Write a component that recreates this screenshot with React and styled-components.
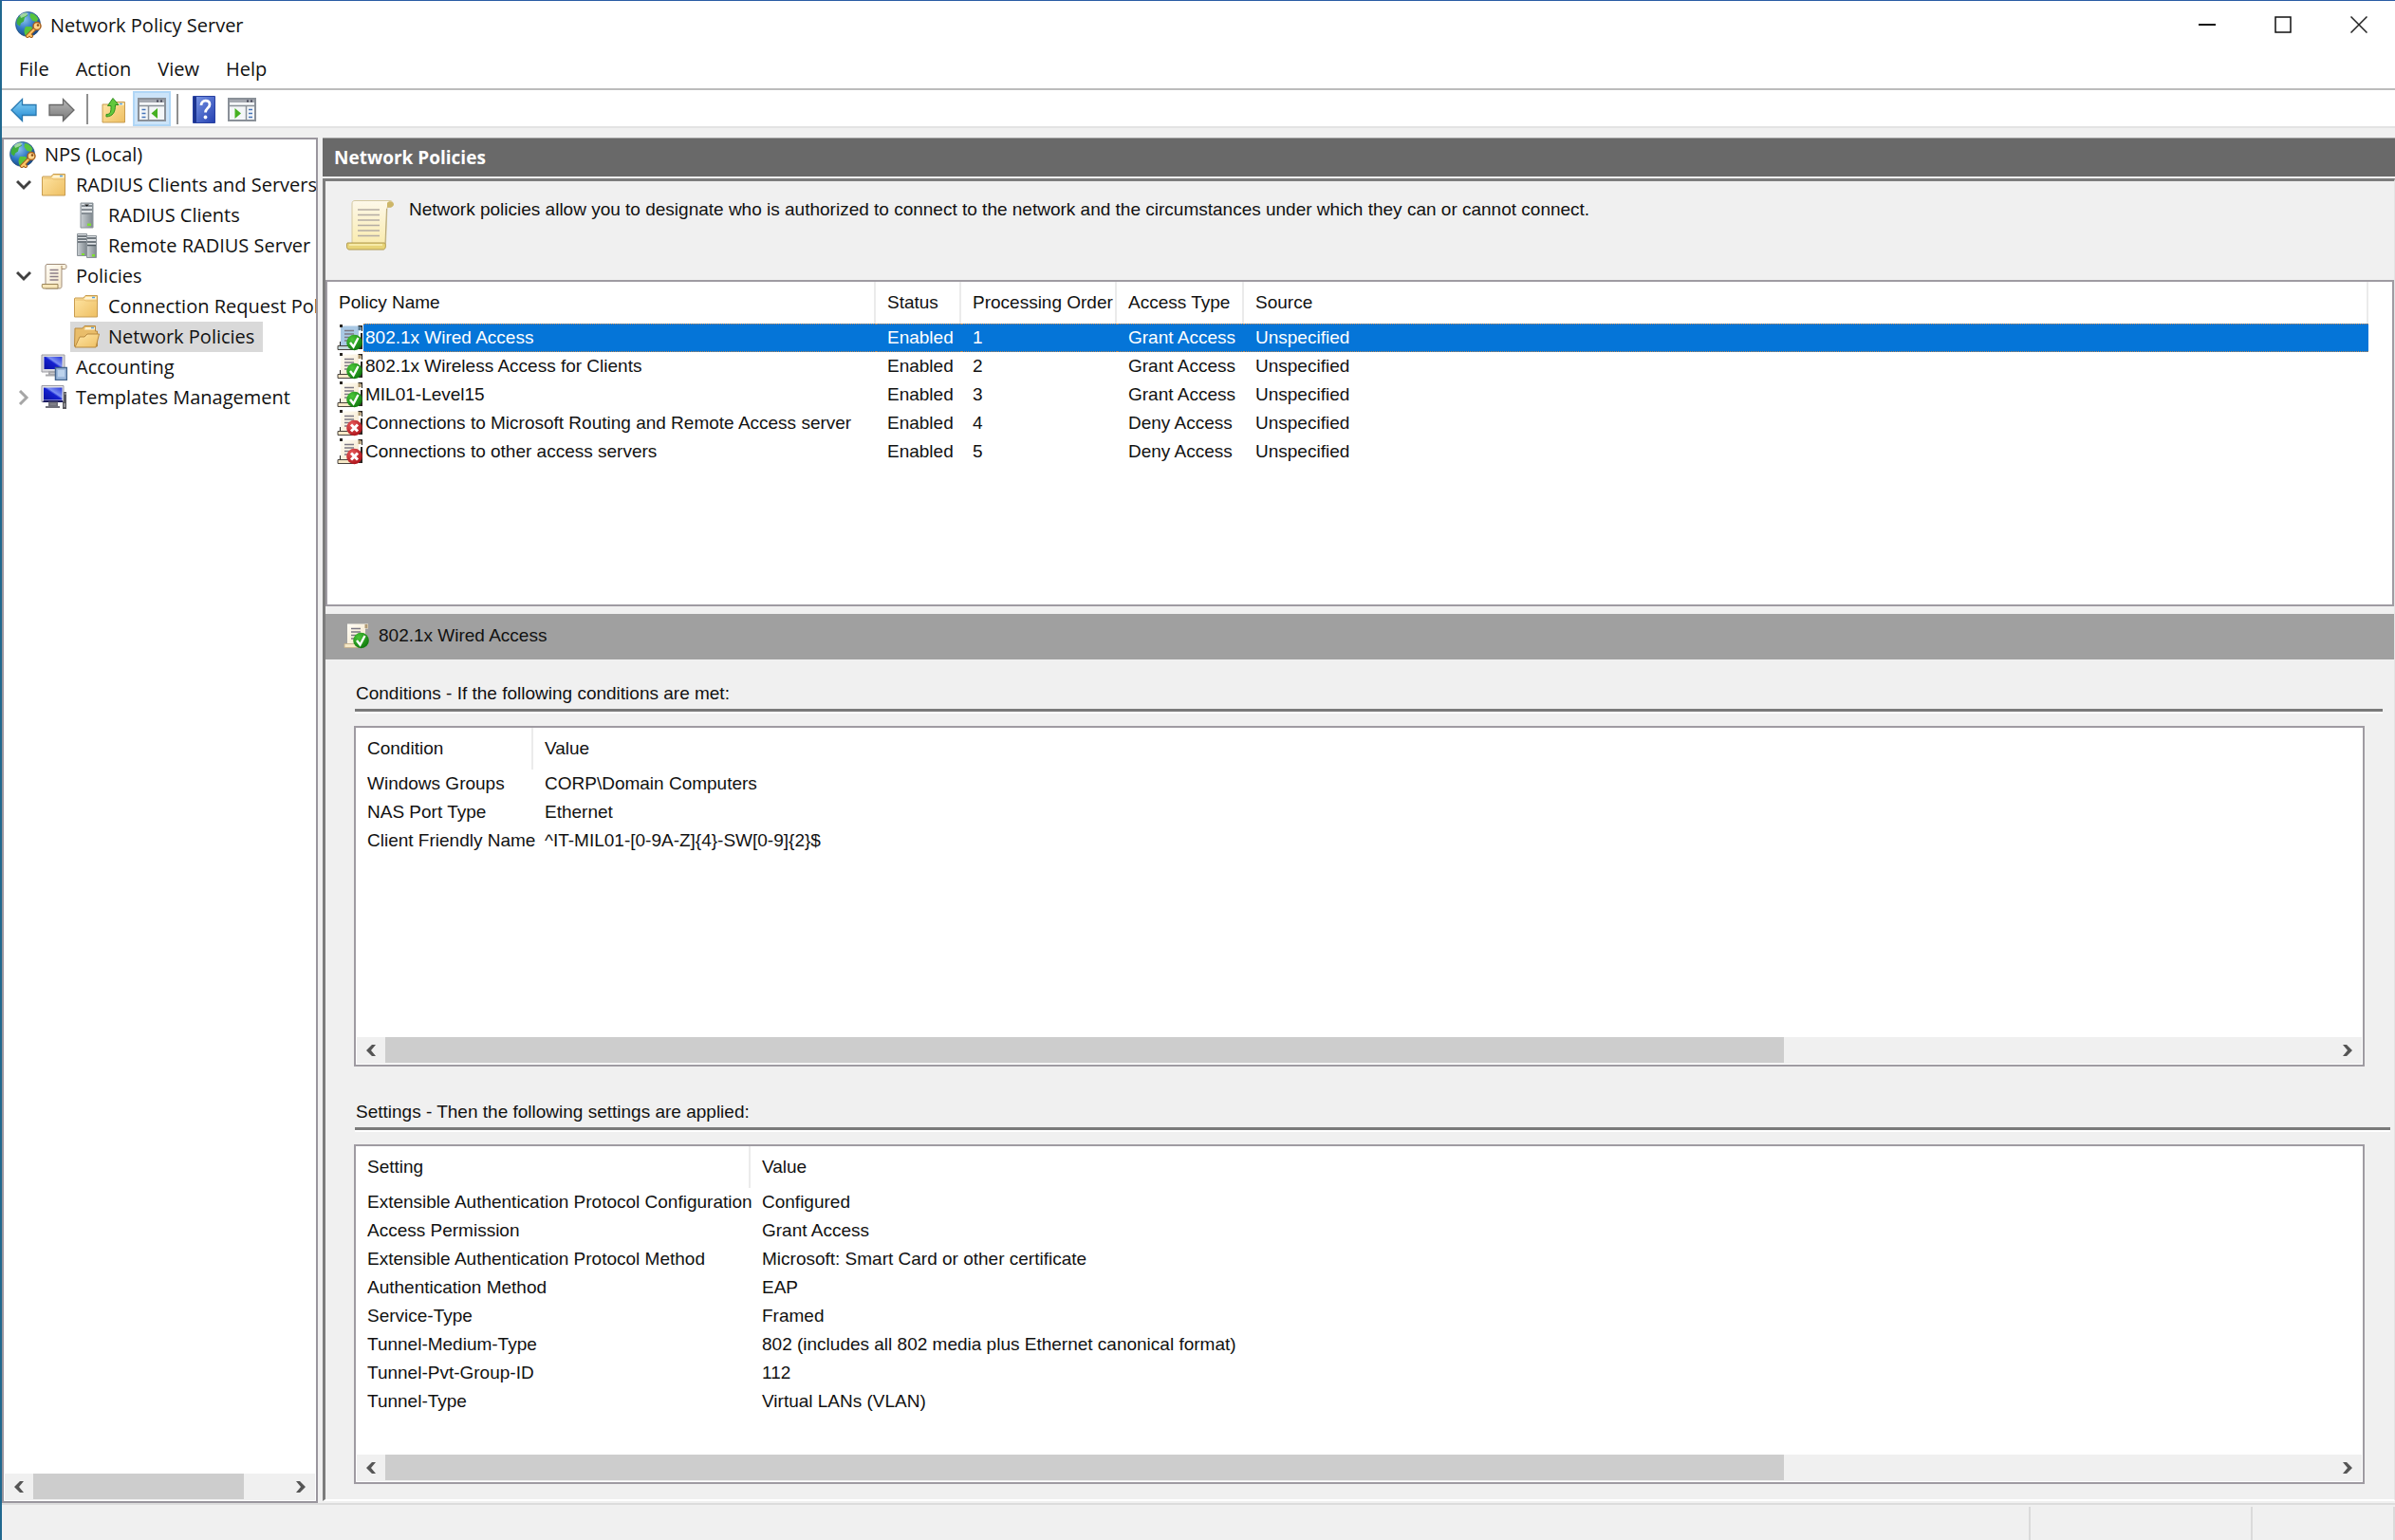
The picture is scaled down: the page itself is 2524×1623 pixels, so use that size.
import React from 'react'
import styled, { createGlobalStyle } from 'styled-components'

const policies = [
  { name: '802.1x Wired Access', status: 'Enabled', order: 1, access: 'Grant Access', source: 'Unspecified' },
  { name: '802.1x Wireless Access for Clients', status: 'Enabled', order: 2, access: 'Grant Access', source: 'Unspecified' },
  { name: 'MIL01-Level15', status: 'Enabled', order: 3, access: 'Grant Access', source: 'Unspecified' },
  { name: 'Connections to Microsoft Routing and Remote Access server', status: 'Enabled', order: 4, access: 'Deny Access', source: 'Unspecified' },
  { name: 'Connections to other access servers', status: 'Enabled', order: 5, access: 'Deny Access', source: 'Unspecified' },
]

const conditions = [
  ['Windows Groups', 'CORP\\Domain Computers'],
  ['NAS Port Type', 'Ethernet'],
  ['Client Friendly Name', '^IT-MIL01-[0-9A-Z]{4}-SW[0-9]{2}$'],
]

const settings = [
  ['Extensible Authentication Protocol Configuration', 'Configured'],
  ['Access Permission', 'Grant Access'],
  ['Extensible Authentication Protocol Method', 'Microsoft: Smart Card or other certificate'],
  ['Authentication Method', 'EAP'],
  ['Service-Type', 'Framed'],
  ['Tunnel-Medium-Type', '802 (includes all 802 media plus Ethernet canonical format)'],
  ['Tunnel-Pvt-Group-ID', '112'],
  ['Tunnel-Type', 'Virtual LANs (VLAN)'],
]

const tree = [
  { label: 'NPS (Local)', level: 0, icon: GlobeIcon },
  { label: 'RADIUS Clients and Servers', level: 1, icon: FolderIcon, state: 'open' },
  { label: 'RADIUS Clients', level: 2, icon: ServerIcon },
  { label: 'Remote RADIUS Server Groups', level: 2, icon: ServersIcon },
  { label: 'Policies', level: 1, icon: ScrollIcon, state: 'open' },
  { label: 'Connection Request Policies', level: 2, icon: FolderIcon },
  { label: 'Network Policies', level: 2, icon: OpenFolderIcon, selected: true },
  { label: 'Accounting', level: 1, icon: AccountingIcon },
  { label: 'Templates Management', level: 1, icon: TemplatesIcon, state: 'closed' },
]

export default function App() {
  return (
    <Window>
      <GlobalStyle />
      <Gradients />
      <TitleBar>
        <GlobeIcon />
        <Title>Network Policy Server</Title>
        <CaptionButtons>
          <CaptionButton aria-label="Minimize">
            <svg width="18" height="18" viewBox="0 0 18 18"><path d="M0 9h18" stroke="#111" strokeWidth="2" /></svg>
          </CaptionButton>
          <CaptionButton aria-label="Maximize">
            <svg width="18" height="18" viewBox="0 0 18 18"><path d="M1 1h16v16H1z" fill="none" stroke="#111" strokeWidth="1.500" /></svg>
          </CaptionButton>
          <CaptionButton aria-label="Close">
            <svg width="18" height="18" viewBox="0 0 18 18"><path d="M0.500 0.500l17 17M17.500 0.500l-17 17" stroke="#222" strokeWidth="1.500" /></svg>
          </CaptionButton>
        </CaptionButtons>
      </TitleBar>
      <MenuBar>
        <MenuItem>File</MenuItem>
        <MenuItem>Action</MenuItem>
        <MenuItem>View</MenuItem>
        <MenuItem>Help</MenuItem>
      </MenuBar>
      <Toolbar>
        <ToolButton aria-label="Back"><BackIcon /></ToolButton>
        <ToolButton aria-label="Forward"><ForwardIcon /></ToolButton>
        <Separator />
        <ToolButton aria-label="Up one level"><UpIcon /></ToolButton>
        <ToolButton aria-label="Show/Hide Console Tree" $active><TreePaneIcon /></ToolButton>
        <Separator />
        <ToolButton aria-label="Help topics"><HelpIcon /></ToolButton>
        <ToolButton aria-label="Show/Hide Action Pane"><ActionPaneIcon /></ToolButton>
      </Toolbar>
      <Body>
        <TreePane>
          <Tree>
            {tree.map(({ label, level, icon: Icon, state, selected }) => (
              <TreeRow key={label} $level={level}>
                {level === 1 && <Expander $closed={state === 'closed'}>{state && <Chevron />}</Expander>}
                <TreeItem $selected={selected}>
                  <Icon />
                  {label}
                </TreeItem>
              </TreeRow>
            ))}
          </Tree>
          <HScroll size={83} />
        </TreePane>
        <Content>
          <PaneTitle>Network Policies</PaneTitle>
          <Frame>
            <Description>
              <BigScroll />
              <DescriptionText>
                Network policies allow you to designate who is authorized to connect to the network and the circumstances under which they can or cannot connect.
              </DescriptionText>
            </Description>
            <PolicyBox>
              <PolicyTable>
                <colgroup>
                  <Col $w={38} />
                  <Col $w={540} />
                  <Col $w={90} />
                  <Col $w={164} />
                  <Col $w={134} />
                  <col />
                </colgroup>
                <thead>
                  <tr>
                    <Th colSpan={2}>Policy Name</Th>
                    <Th>Status</Th>
                    <Th>Processing Order</Th>
                    <Th>Access Type</Th>
                    <Th>Source</Th>
                  </tr>
                </thead>
                <tbody>
                  {policies.map((p, i) => (
                    <PolicyRow key={p.name} $selected={i === 0}>
                      <IconTd><PolicyIcon deny={p.access === 'Deny Access'} tinted={i === 0} framed /></IconTd>
                      <NameTd>{p.name}</NameTd>
                      <Td>{p.status}</Td>
                      <Td>{p.order}</Td>
                      <Td>{p.access}</Td>
                      <Td>{p.source}</Td>
                    </PolicyRow>
                  ))}
                </tbody>
              </PolicyTable>
            </PolicyBox>
            <PolicyBar>
              <PolicyIcon />
              802.1x Wired Access
            </PolicyBar>
            <GroupHeading $top={24} $end={12}>Conditions - If the following conditions are met:</GroupHeading>
            <DetailList heads={['Condition', 'Value']} rows={conditions} first={187} />
            <GroupHeading $top={36} $end={4}>Settings - Then the following settings are applied:</GroupHeading>
            <DetailList heads={['Setting', 'Value']} rows={settings} first={416} />
          </Frame>
        </Content>
      </Body>
      <StatusBar>
        <StatusCell $grow />
        <StatusCell $w={234} />
        <StatusCell $w={150} />
      </StatusBar>
    </Window>
  )
}

function DetailList({ heads, rows, first }) {
  return (
    <DetailBox>
      <Table>
        <colgroup>
          <Col $w={first} />
          <col />
        </colgroup>
        <thead>
          <tr>
            <Th>{heads[0]}</Th>
            <Th $last>{heads[1]}</Th>
          </tr>
        </thead>
        <tbody>
          {rows.map(([name, value]) => (
            <tr key={name}>
              <Td>{name}</Td>
              <Td>{value}</Td>
            </tr>
          ))}
        </tbody>
      </Table>
      <HScroll size={71.8} />
    </DetailBox>
  )
}

function HScroll({ size }) {
  return (
    <ScrollBar>
      <ScrollButton aria-label="Scroll left">
        <svg width="12" height="14" viewBox="0 0 12 14"><path d="M11 1H7L1 7l6 6h4L6 7z" fill="#555" /></svg>
      </ScrollButton>
      <Track>
        <Thumb style={{ width: `${size}%` }} />
      </Track>
      <ScrollButton aria-label="Scroll right">
        <svg width="12" height="14" viewBox="0 0 12 14"><path d="M1 1h4l6 6-6 6H1l5-6z" fill="#555" /></svg>
      </ScrollButton>
    </ScrollBar>
  )
}

function Gradients() {
  return (
    <HiddenSvg width="0" height="0" aria-hidden="true">
      <defs>
        <radialGradient id="sea" cx="0.35" cy="0.3" r="0.8">
          <stop offset="0" stopColor="#8cc4ee" />
          <stop offset="0.5" stopColor="#2f78c4" />
          <stop offset="1" stopColor="#123c78" />
        </radialGradient>
        <linearGradient id="folder" x1="0" y1="0" x2="1" y2="1">
          <stop offset="0" stopColor="#ffe6a6" />
          <stop offset="1" stopColor="#eebf62" />
        </linearGradient>
        <linearGradient id="steel" x1="0" y1="0" x2="1" y2="0">
          <stop offset="0" stopColor="#c9cfd3" />
          <stop offset="1" stopColor="#7f888e" />
        </linearGradient>
        <linearGradient id="paper" x1="0" y1="0" x2="1" y2="1">
          <stop offset="0" stopColor="#fffdf6" />
          <stop offset="1" stopColor="#f3e3c2" />
        </linearGradient>
        <linearGradient id="parchment" x1="0" y1="0" x2="0" y2="1">
          <stop offset="0" stopColor="#fdf8ea" />
          <stop offset="1" stopColor="#f9eaa8" />
        </linearGradient>
        <linearGradient id="screen" x1="0" y1="1" x2="1" y2="0">
          <stop offset="0" stopColor="#0a10a0" />
          <stop offset="0.5" stopColor="#1420d0" />
          <stop offset="0.6" stopColor="#7c90f4" />
          <stop offset="1" stopColor="#2634d8" />
        </linearGradient>
        <linearGradient id="blueArrow" x1="0" y1="0" x2="0" y2="1">
          <stop offset="0" stopColor="#8ad4f8" />
          <stop offset="1" stopColor="#1e86d0" />
        </linearGradient>
        <linearGradient id="grayArrow" x1="0" y1="0" x2="0" y2="1">
          <stop offset="0" stopColor="#b8b8b8" />
          <stop offset="1" stopColor="#777" />
        </linearGradient>
        <linearGradient id="book" x1="0" y1="0" x2="1" y2="1">
          <stop offset="0" stopColor="#7d9ae8" />
          <stop offset="1" stopColor="#2440b0" />
        </linearGradient>
        <radialGradient id="ok" cx="0.35" cy="0.3" r="0.8">
          <stop offset="0" stopColor="#4cc83a" />
          <stop offset="1" stopColor="#087008" />
        </radialGradient>
        <radialGradient id="no" cx="0.35" cy="0.3" r="0.8">
          <stop offset="0" stopColor="#e85c5c" />
          <stop offset="1" stopColor="#a80c14" />
        </radialGradient>
      </defs>
    </HiddenSvg>
  )
}

function GlobeIcon() {
  return (
    <svg width="28" height="28" viewBox="0 0 28 28">
      <circle cx="13.500" cy="13.500" r="13" fill="url(#sea)" stroke="#2a5580" strokeWidth="0.800" />
      <path d="M3 7c3-4 6-5.500 9-5.500l1 3-3 2-1 4-3 2-1 3-3-2c-1-2 0-5 1-6.500z" fill="#3fae3c" />
      <path d="M16 2c4 0 7 3 8.500 6l-2 3-4-1-3-4zM11 16l6 0 2 3-3 6-5 1c-2-3-2-7 0-10z" fill="#58c43c" />
      <path d="M5 4c3-3 7-3 9-2l-3 3-5 2z" fill="#fff" opacity="0.500" />
      <path d="M21 18l-8 8M15 24l2 2" stroke="#a8601c" strokeWidth="4" strokeLinecap="round" />
      <path d="M21 18l-8 8M15 24l2 2" stroke="#ffc868" strokeWidth="2" strokeLinecap="round" />
      <circle cx="23" cy="15.500" r="4" fill="#ffd48a" stroke="#a8601c" strokeWidth="1.500" />
      <circle cx="24" cy="14.500" r="1.300" fill="#8a4c14" />
    </svg>
  )
}

function FolderIcon() {
  return (
    <svg width="28" height="28" viewBox="0 0 28 28">
      <path d="M2 5h9l2-2.500h12.500V25H1.500V6z" fill="url(#folder)" stroke="#c89c50" />
      <path d="M13.500 4h11v2.500h-13z" fill="#fff4d4" />
      <path d="M20 4.500h3" stroke="#58a0e0" strokeWidth="1.500" />
      <path d="M2.500 7h9l2 1h11.500" stroke="#e8be70" fill="none" />
    </svg>
  )
}

function OpenFolderIcon() {
  return (
    <svg width="28" height="28" viewBox="0 0 28 28">
      <path d="M2 5h8l2-2.500h11.500V8h2v16H1.500z" fill="#e9bd6a" stroke="#b88a40" />
      <path d="M13 4h10v2.500H12z" fill="#fff4d4" />
      <path d="M19 4.500h3" stroke="#58a0e0" strokeWidth="1.500" />
      <path d="M2 25l5-11h5l3-3h12.500L24 25z" fill="url(#folder)" stroke="#b88a40" />
    </svg>
  )
}

function ServerIcon() {
  return (
    <svg width="28" height="28" viewBox="0 0 28 28">
      <path d="M8 1h13v26H8z" fill="url(#steel)" stroke="#8a9298" />
      <path d="M9 2h11v11H9z" fill="#dde1e4" />
      <path d="M9 4h11M9 8h11M9 12h11" stroke="#68727a" strokeWidth="1.500" />
      <path d="M12 2.500h5l-2.500 2z" fill="#111" />
      <path d="M15 22.500h4v2.500h-4z" fill="#7ee030" />
    </svg>
  )
}

function ServersIcon() {
  return (
    <svg width="28" height="28" viewBox="0 0 28 28">
      <path d="M4.500 1.500h10v23h-10z" fill="url(#steel)" stroke="#8a9298" />
      <path d="M5 2h9v9H5z" fill="#dde1e4" />
      <path d="M5 4h9M5 7h9M5 10h9" stroke="#4c565e" strokeWidth="1.500" />
      <path d="M14.500 3.500h10v23h-10z" fill="url(#steel)" stroke="#8a9298" />
      <path d="M15 4h9v10h-9z" fill="#dde1e4" />
      <path d="M15 6h9M15 10h9M15 13.500h9" stroke="#4c565e" strokeWidth="1.500" />
      <path d="M9 22h3v2H9zM20 23h3v2.500h-3z" fill="#7ee030" />
    </svg>
  )
}

function ScrollIcon() {
  return (
    <svg width="28" height="28" viewBox="0 0 28 28">
      <path d="M6 1.500h19.500c2 0 2 5 0 5H22v18c0 2-1 2.500-3 2.500H5V3z" fill="url(#paper)" stroke="#a08c78" />
      <path d="M22 6.500V3" stroke="#a08050" />
      <path d="M9.500 7.500h9M9.500 11h9M9.500 14.500h9M9.500 18h9" stroke="#8c7e88" strokeWidth="1.300" />
      <path d="M1.500 22.500h16.500v4.500H3c-2 0-2-3-1.500-4.500z" fill="#f7e6b8" stroke="#9a8458" />
    </svg>
  )
}

function BigScroll() {
  return (
    <svg width="50" height="54" viewBox="0 0 50 54">
      <path d="M9 1.500h37c4 0 4 7 0 7h-3l-1.500 38c0 4-1 6-3.500 6H6V5c0-2.500 1-3.500 3-3.500z" fill="url(#parchment)" stroke="#d4c8a0" />
      <path d="M43 8.500V4c1-2.500 5-2.500 6.500 0s-1 5-6.500 4.500z" fill="#cdb668" />
      <path d="M42.500 10L41 47" stroke="#b8a878" />
      <path d="M12 11h23M12 16.500h23M12 22h23M12 27.500h23M12 33h23M12 38.500h23" stroke="#b4aca4" strokeWidth="1.500" />
      <path d="M1 46h39c2 0 2 7-1 7H3c-3 0-3-5-2-7z" fill="#e8d478" stroke="#b09a50" />
      <path d="M3 48h35" stroke="#fbf2b8" strokeWidth="1.500" />
    </svg>
  )
}

function AccountingIcon() {
  return (
    <svg width="28" height="28" viewBox="0 0 28 28">
      <path d="M1 1h24v18H1z" fill="#d8d8dc" stroke="#9a9aa0" />
      <path d="M3.500 3h19v13h-19z" fill="url(#screen)" />
      <path d="M9 19h8v3H9zM5 22.500h14" stroke="#a8a8ac" fill="#c8c8cc" strokeWidth="2" />
      <path d="M15.500 14.500h12v13h-12z" fill="#9cb8dc" stroke="#44648c" strokeWidth="1.500" />
      <path d="M18 17h7v7h-7z" fill="#bcd2ec" />
    </svg>
  )
}

function TemplatesIcon() {
  return (
    <svg width="28" height="28" viewBox="0 0 28 28">
      <path d="M1 1.500h23v17H1z" fill="#e4e4e8" stroke="#9a9aa4" />
      <path d="M3 3.500h19.500v13H3z" fill="url(#screen)" />
      <path d="M2 19l1-2h20l1 2z" fill="#1a1a60" />
      <path d="M9 19.500h8v3H9zM5 24h15" stroke="#70707a" fill="#909098" strokeWidth="2" />
      <path d="M24 8h3v18h-4v-8h1z" fill="#58585e" />
      <path d="M25 10h1.500M25 20v4" stroke="#c8c8cc" />
    </svg>
  )
}

function Chevron() {
  return (
    <svg width="16" height="12" viewBox="0 0 16 12">
      <path d="M1 2l7 7 7-7" fill="none" stroke="currentColor" strokeWidth="3" />
    </svg>
  )
}

function BackIcon() {
  return (
    <svg width="28" height="26" viewBox="0 0 28 26">
      <path d="M1 13L12.500 1.500V7.500H27v11H12.500v6z" fill="url(#blueArrow)" stroke="#2878b0" strokeWidth="1.300" />
    </svg>
  )
}

function ForwardIcon() {
  return (
    <svg width="28" height="26" viewBox="0 0 28 26">
      <path d="M27 13L15.500 1.500V7.500H1v11h14.500v6z" fill="url(#grayArrow)" stroke="#686868" strokeWidth="1.300" />
    </svg>
  )
}

function UpIcon() {
  return (
    <svg width="28" height="28" viewBox="0 0 28 28">
      <path d="M2 8h9l2-2.500h12.500V27H2z" fill="url(#folder)" stroke="#c89c50" />
      <path d="M16 6.500h8.500V9H14z" fill="#fff4d4" />
      <path d="M20 7.500h3" stroke="#58a0e0" strokeWidth="1.500" />
      <path d="M6 18.500c5 0 5-3 5-9H7.500L13 1.500l6 7h-3.500c0 8-2.500 12-9.500 12.500z" fill="#62c83c" stroke="#2f8f1c" />
    </svg>
  )
}

function PaneShell() {
  return (
    <>
      <path d="M1 1h28v23H1z" fill="#f4f6f8" stroke="#8a9098" strokeWidth="2" />
      <path d="M2 2h26v3H2z" fill="#a4a8b0" />
      <path d="M20 2.500h2v2h-2zM24 2.500h2v2h-2z" fill="#445" />
      <path d="M2 8.500h26" stroke="#8a9098" strokeWidth="1.500" />
    </>
  )
}

function TreePaneIcon() {
  return (
    <svg width="30" height="25" viewBox="0 0 30 25">
      <PaneShell />
      <path d="M11.500 9v15" stroke="#8a9098" strokeWidth="1.500" />
      <path d="M4.500 12.500h4M4.500 16.500h4M4.500 20.500h4" stroke="#4474b8" strokeWidth="1.500" />
      <path d="M21 11v11l-6.500-5.500z" fill="#46b022" />
    </svg>
  )
}

function ActionPaneIcon() {
  return (
    <svg width="30" height="25" viewBox="0 0 30 25">
      <PaneShell />
      <path d="M19.500 9v15" stroke="#8a9098" strokeWidth="1.500" />
      <path d="M22 12.500h4M22 16.500h4M22 20.500h4" stroke="#4474b8" strokeWidth="1.500" />
      <path d="M7.500 11v11l6.500-5.500z" fill="#46b022" />
    </svg>
  )
}

function HelpIcon() {
  return (
    <svg width="24" height="29" viewBox="0 0 24 29">
      <path d="M0.500 0.500h23v28H0.500z" fill="url(#book)" stroke="#2840a0" />
      <path d="M1 1h3v27H1z" fill="#1c3490" />
      <path d="M9 10c0-6 9-6.500 9-1 0 4-4.500 4-4.500 8.500" fill="none" stroke="#fff" strokeWidth="2.800" />
      <circle cx="13.500" cy="22.500" r="1.900" fill="#fff" />
    </svg>
  )
}

function PolicyIcon({ deny, tinted, framed }) {
  const edge = framed ? '#4a443e' : '#c8b490'
  return (
    <svg width="28" height="28" viewBox="0 0 28 28">
      <path d="M4 1.500h22v5h-3V24H4z" fill={tinted ? '#a9c8e4' : 'url(#paper)'} />
      {framed && <path d="M3 0h3v3H3zM22 1h5v6h-1V3h-2zM25 9h2v17h-4v-2h2zM3 18h1v5H3z" fill="#2a2622" />}
      <path d="M22.500 2h3v4h-3z" fill={tinted ? '#5a7a90' : '#b09a74'} />
      <path d="M1 22.500h17v4H1z" fill={tinted ? '#c4d8dc' : '#f5e7c6'} stroke={edge} />
      <path d="M8 6.500h10M8 10h10M8 13.500h7M8 17h4" stroke="#7c7884" strokeWidth="1.300" />
      <circle cx="18.500" cy="19" r="8.300" fill={deny ? 'url(#no)' : 'url(#ok)'} />
      {deny ? (
        <path d="M15 15.500l7 7M22 15.500l-7 7" stroke="#fff" strokeWidth="3" />
      ) : (
        <path d="M14 19l3.500 4.500 5-9.500" fill="none" stroke="#fff" strokeWidth="2.400" />
      )}
    </svg>
  )
}

const GlobalStyle = createGlobalStyle`
    *{
        box-sizing: border-box;
    }
    body{
        margin: 0;
        background: #f0f0f0;
        color: #111;
        font-family: 'Liberation Sans', Arial, sans-serif;
        font-size: 19px;
    }
    button{
        border: none;
        background: none;
        padding: 0;
        color: inherit;
        font: inherit;
    }
    svg{
        display: block;
        flex: none;
    }
`
const uiFont = `'Open Sans', 'Noto Sans', sans-serif`

const HiddenSvg = styled.svg`
    position: absolute;
`
const Window = styled.div`
    display: flex;
    flex-direction: column;
    min-height: 100vh;
    border-top: 1px solid #2a5ca4;
    border-left: 2px solid #20688f;
`
const TitleBar = styled.header`
    display: flex;
    align-items: center;
    height: 52px;
    padding: 0 0 2px 14px;
    background: #fff;
`
const Title = styled.h1`
    flex: 1;
    margin: 0 0 0 9px;
    font-family: ${uiFont};
    font-size: 20px;
    font-weight: 400;
`
const CaptionButtons = styled.div`
    display: flex;
    gap: 4px;
`
const CaptionButton = styled.button`
    display: flex;
    align-items: center;
    justify-content: center;
    width: 76px;
    height: 50px;
`
const MenuBar = styled.nav`
    display: flex;
    height: 42px;
    padding-left: 4px;
    background: #fff;
    border-bottom: 2px solid #bcbcbc;
`
const MenuItem = styled.button`
    padding: 0 14px 2px;
    font-family: ${uiFont};
    font-size: 20px;
`
const Toolbar = styled.div`
    display: flex;
    align-items: center;
    height: 40px;
    padding: 1px 0 0 3px;
    background: #fff;
    border-bottom: 2px solid #e3e3e3;
`
const ToolButton = styled.button`
    display: flex;
    align-items: center;
    justify-content: center;
    width: 40px;
    height: 37px;
    padding-top: 2px;
    background: ${({ $active }) => ($active ? '#cce4f9' : 'none')};
    border: ${({ $active }) => ($active ? '2px solid #b0d6f6' : 'none')};
`
const Separator = styled.div`
    width: 2px;
    height: 32px;
    margin: 0 7px 0 6px;
    background: #909090;
`
const Body = styled.main`
    display: flex;
    flex: 1;
    gap: 5px;
    padding-top: 10px;
`
const TreePane = styled.aside`
    display: flex;
    flex-direction: column;
    flex: 0 0 333px;
    min-width: 0;
    background: #fff;
    border: 2px solid #9a969e;
`
const Tree = styled.ul`
    flex: 1;
    margin: 0;
    padding: 0;
    overflow: hidden;
    list-style: none;
    font-family: ${uiFont};
    font-size: 20px;
    line-height: 28px;
`
const TreeRow = styled.li`
    display: flex;
    align-items: center;
    height: 32px;
    padding-left: ${({ $level }) => [3, 5, 70][$level]}px;
`
const Expander = styled.span`
    display: flex;
    flex: none;
    justify-content: center;
    width: 31px;
    color: ${({ $closed }) => ($closed ? '#a6a6a6' : '#404040')};
    svg{
        transform: ${({ $closed }) => ($closed ? 'rotate(-90deg)' : 'none')};
    }
`
const TreeItem = styled.button`
    display: flex;
    align-items: center;
    gap: 9px;
    height: 32px;
    padding: 0 9px 1px 3px;
    white-space: nowrap;
    background: ${({ $selected }) => ($selected ? '#d9d9d9' : 'none')};
`
const ScrollBar = styled.div`
    display: flex;
    flex: none;
    height: 28px;
    margin: 0 1px 1px;
    background: #f0f0f0;
`
const ScrollButton = styled.button`
    display: flex;
    align-items: center;
    justify-content: center;
    width: 30px;
`
const Track = styled.div`
    flex: 1;
`
const Thumb = styled.div`
    height: 27px;
    background: #cdcdcd;
`
const Content = styled.section`
    display: flex;
    flex-direction: column;
    flex: 1;
    min-width: 0;
    padding-bottom: 2px;
`
const PaneTitle = styled.h2`
    display: flex;
    align-items: center;
    height: 41px;
    margin: 0 0 2px;
    padding-left: 12px;
    background: #696969;
    border-top: 1px solid #a0a0a0;
    color: #fff;
    font-family: ${uiFont};
    font-size: 19px;
    font-weight: 700;
`
const Frame = styled.div`
    display: flex;
    flex-direction: column;
    flex: 1;
    padding-bottom: 16px;
    border: solid;
    border-width: 3px 1px 2px 3px;
    border-color: #7c7c7c #e4e4e4 #fff #7c7c7c;
`
const Description = styled.div`
    display: flex;
    gap: 16px;
    height: 104px;
    padding: 19px 22px 0;
`
const DescriptionText = styled.p`
    margin: 0;
    line-height: 22px;
`
const Box = styled.div`
    display: flex;
    flex-direction: column;
    background: #fff;
    border: 2px solid #9f9ba2;
`
const PolicyBox = styled(Box)`
    flex: 344 0 0;
`
const DetailBox = styled(Box)`
    flex: 358 0 0;
    justify-content: space-between;
    margin: 0 31px 0 30px;
`
const Table = styled.table`
    table-layout: fixed;
    width: 100%;
    border-spacing: 0;
`
const PolicyTable = styled(Table)`
    width: auto;
    margin-right: 25px;
`
const Col = styled.col`
    width: ${({ $w }) => $w}px;
`
const Th = styled.th`
    height: 44px;
    padding: 0 0 0 12px;
    border-right: ${({ $last }) => ($last ? 'none' : '2px solid #ebebeb')};
    font-weight: 400;
    text-align: left;
`
const Td = styled.td`
    height: 30px;
    padding: 0 0 0 12px;
    white-space: nowrap;
`
const NameTd = styled(Td)`
    padding-left: 2px;
`
const IconTd = styled(Td)`
    padding-left: 10px;
`
const PolicyRow = styled.tr`
    ${Td}:not(:first-child){
        color: ${({ $selected }) => ($selected ? '#fff' : 'inherit')};
        background: ${({ $selected }) => ($selected ? '#0575d8' : 'none')};
        border: ${({ $selected }) => ($selected ? 'dotted #c08850' : 'none')};
        border-width: 1px 0;
    }
`
const PolicyBar = styled.h3`
    display: flex;
    align-items: center;
    gap: 9px;
    height: 48px;
    margin: 8px 0 0;
    padding: 0 0 2px 19px;
    background: #a0a0a0;
    font-size: 19px;
    font-weight: 400;
`
const GroupHeading = styled.h4`
    margin: 0 ${({ $end }) => $end}px 15px 31px;
    padding: ${({ $top }) => $top}px 0 4px 1px;
    border-bottom: 3px solid #7a7a7a;
    box-shadow: 0 2px #fff;
    font-size: 19px;
    font-weight: 400;
    line-height: 24px;
`
const StatusBar = styled.footer`
    display: flex;
    height: 39px;
    padding-top: 2px;
    border-top: 2px solid #dcdcdc;
`
const StatusCell = styled.div`
    flex: ${({ $grow }) => ($grow ? 1 : 'none')};
    width: ${({ $w }) => $w}px;
    border-right: 2px solid #dadada;
`
